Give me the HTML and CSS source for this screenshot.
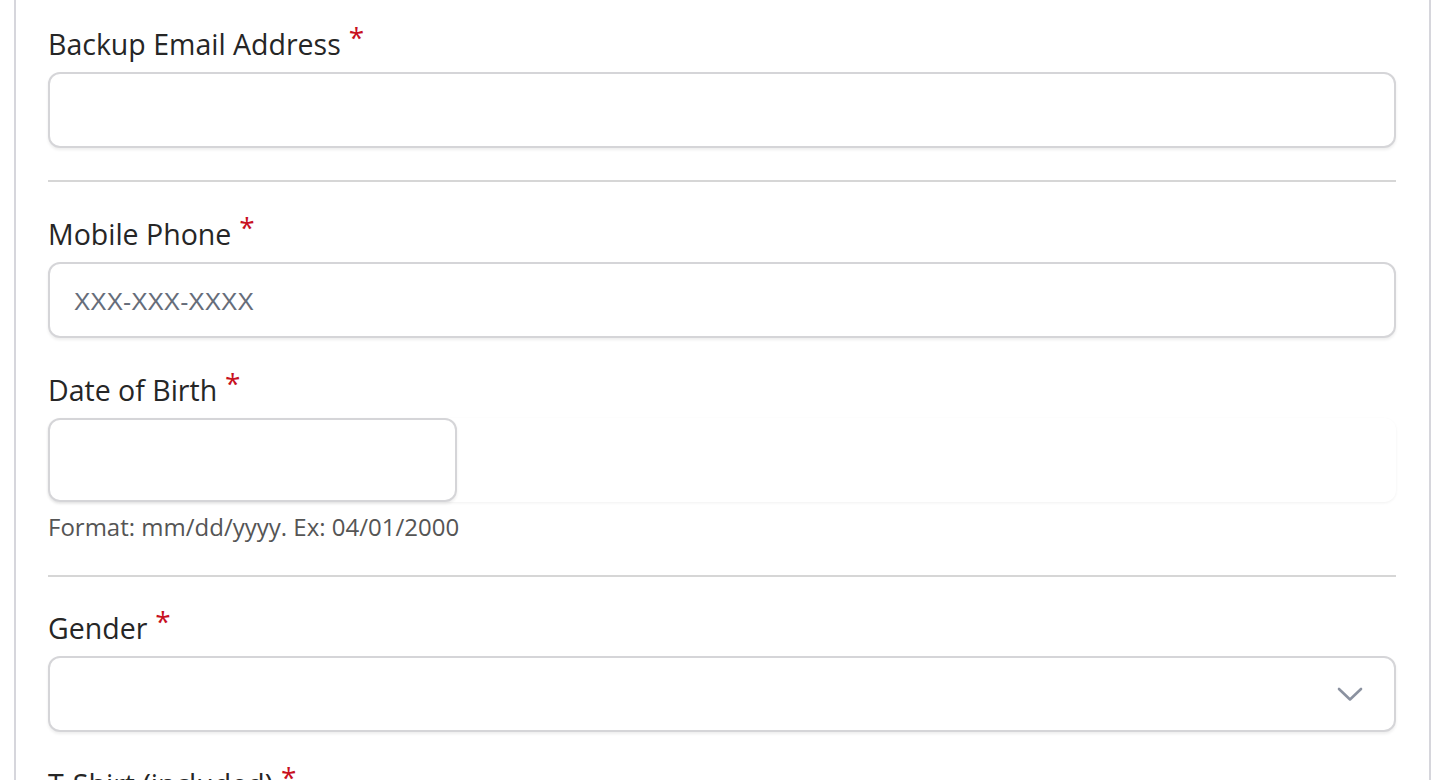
FILE: index.html
```html
<!DOCTYPE html>
<html lang="en">
<head>
  <meta charset="UTF-8">
  <meta name="viewport" content="width=device-width, initial-scale=1.0">
  <title>Registration</title>
  <link rel="stylesheet" href="styles.css">
</head>
<body>
  <div class="panel">
    <form class="reg-form">
      <div class="field">
        <label class="field-label" for="backupEmail">Backup Email Address<span class="req">*</span></label>
        <input class="text-input" id="backupEmail" type="email">
      </div>

      <hr class="divider">

      <div class="field">
        <label class="field-label" for="mobile">Mobile Phone<span class="req">*</span></label>
        <input class="text-input" id="mobile" type="tel" placeholder="XXX-XXX-XXXX">
      </div>

      <div class="field">
        <label class="field-label" for="dob">Date of Birth<span class="req">*</span></label>
        <div class="date-wrap">
          <input class="text-input date-input" id="dob" type="text">
        </div>
        <div class="help-text">Format: mm/dd/yyyy. Ex: 04/01/2000</div>
      </div>

      <hr class="divider divider-tight">

      <div class="field">
        <label class="field-label" for="gender">Gender<span class="req">*</span></label>
        <div class="select-wrap">
          <select class="text-input select-input" id="gender">
            <option value=""></option>
            <option>Female</option>
            <option>Male</option>
            <option>Non-binary</option>
          </select>
          <svg class="chevron" width="26" height="15" viewBox="0 0 26 15">
            <path d="M2 2 L13 12.5 L24 2" fill="none" stroke="#8b92a0" stroke-width="2.6" stroke-linecap="round" stroke-linejoin="round"/>
          </svg>
        </div>
      </div>

      <div class="field">
        <label class="field-label" for="tshirt">T-Shirt (included)<span class="req">*</span></label>
      </div>
    </form>
  </div>
</body>
</html>
```

FILE: styles.css
```css
html, body {
  margin: 0;
  padding: 0;
  background: #fff;
  font-family: "Open Sans", "Noto Sans", sans-serif;
  color: #262626;
  overflow: hidden;
}
.panel {
  margin: 0 1px 0 14px;
  border-left: 2px solid #d6d6dc;
  border-right: 2px solid #d6d6dc;
  padding: 23px 33px 0 32px;
  min-height: 780px;
  box-sizing: border-box;
}
.reg-form {
  display: flex;
  flex-direction: column;
}
.field + .field {
  margin-top: 31px;
}
.field-label {
  display: block;
  font-size: 28.5px;
  line-height: 42px;
  margin-bottom: 7px;
  color: #262626;
}
.req {
  color: #c8101e;
  margin-left: 8px;
  vertical-align: 7px;
  font-size: 28px;
  line-height: 0;
}
.text-input {
  display: block;
  width: 100%;
  box-sizing: border-box;
  height: 76px;
  border: 2px solid #d5d5d8;
  border-radius: 12px;
  background: #fff;
  padding: 4px 24px 0;
  font-family: "Liberation Sans", Arial, sans-serif;
  font-size: 24.5px;
  color: #333;
  box-shadow: 0 2px 3px rgba(0, 0, 0, 0.07);
  outline: none;
  margin: 0;
}
.text-input::placeholder {
  color: #666d7a;
}
.divider {
  border: none;
  border-top: 2px solid #d6d6d6;
  margin: 32px 0 31px;
  height: 0;
}
.divider-tight {
  margin: 30px 0 30px;
}
.date-wrap {
  border-radius: 12px;
  box-shadow: 0 1px 3px rgba(0, 0, 0, 0.06);
}
.date-input {
  width: 409px;
  height: 84px;
}
.help-text {
  margin-top: 7px;
  font-size: 24px;
  line-height: 36px;
  color: #555;
}
.select-wrap {
  position: relative;
}
.select-input {
  appearance: none;
  -webkit-appearance: none;
}
.chevron {
  position: absolute;
  right: 33px;
  top: 31px;
  pointer-events: none;
}
```
